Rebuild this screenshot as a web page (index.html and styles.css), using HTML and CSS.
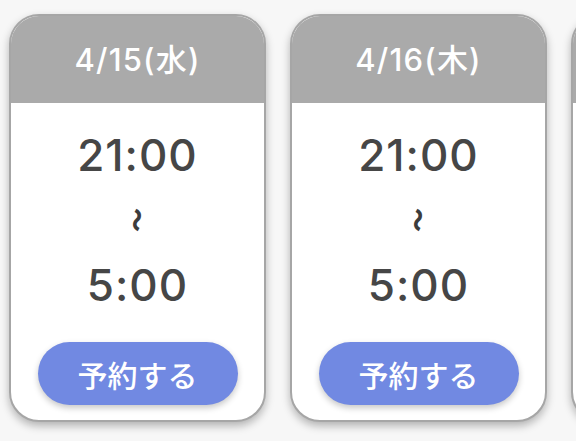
FILE: index.html
```html
<!DOCTYPE html>
<html lang="ja">
<head>
<meta charset="utf-8">
<link rel="stylesheet" href="styles.css">
</head>
<body>
<div class="row">
  <div class="card">
    <div class="head">4/15(水)</div>
    <div class="body">
      <div class="time t1">21:00</div>
      <div class="wave"><span>〜</span></div>
      <div class="time t2">5:00</div>
      <div class="btn">予約する</div>
    </div>
  </div>
  <div class="card">
    <div class="head">4/16(木)</div>
    <div class="body">
      <div class="time t1">21:00</div>
      <div class="wave"><span>〜</span></div>
      <div class="time t2">5:00</div>
      <div class="btn">予約する</div>
    </div>
  </div>
  <div class="card">
    <div class="head"></div>
    <div class="body"></div>
  </div>
</div>
</body>
</html>
```
FILE: styles.css
```css
html, body {
  margin: 0;
  height: 100%;
}
body {
  background: #f7f7f7;
  overflow: hidden;
  font-family: Inter, "Noto Sans CJK JP", sans-serif;
}
.row {
  display: flex;
  gap: 24px;
  padding: 14px 0 0 9px;
}
.card {
  flex-shrink: 0;
  width: 257px;
  height: 408px;
  box-sizing: border-box;
  border: 2px solid #a6a6a6;
  border-radius: 30px;
  background: #fff;
  overflow: hidden;
  display: flex;
  flex-direction: column;
  box-shadow: 0 4px 8px rgba(0, 0, 0, 0.28);
}
.head {
  height: 87px;
  flex-shrink: 0;
  background: #aaaaaa;
  color: #fff;
  font-size: 31px;
  font-weight: 500;
  letter-spacing: 1.2px;
  display: flex;
  align-items: center;
  justify-content: center;
  padding-bottom: 4px;
  box-sizing: border-box;
}
.body {
  flex: 1;
  display: flex;
  flex-direction: column;
  align-items: center;
}
.time {
  font-size: 44px;
  font-weight: 500;
  line-height: 44px;
  color: #464646;
  letter-spacing: 1px;
}
.t1 {
  margin-top: 30px;
}
.wave {
  height: 86px;
  display: flex;
  align-items: center;
  justify-content: center;
}
.wave span {
  display: inline-block;
  transform: rotate(90deg);
  font-family: "Noto Sans CJK JP", sans-serif;
  font-size: 24px;
  font-weight: 900;
  line-height: 24px;
  color: #3c3c3c;
}
.btn {
  margin-top: 35px;
  width: 200px;
  height: 63px;
  border-radius: 32px;
  background: #7189e2;
  color: #fff;
  font-family: "Noto Sans CJK JP", sans-serif;
  font-size: 30px;
  font-weight: 500;
  display: flex;
  align-items: center;
  justify-content: center;
  box-shadow: 0 3px 6px rgba(0, 0, 0, 0.22);
}
```
